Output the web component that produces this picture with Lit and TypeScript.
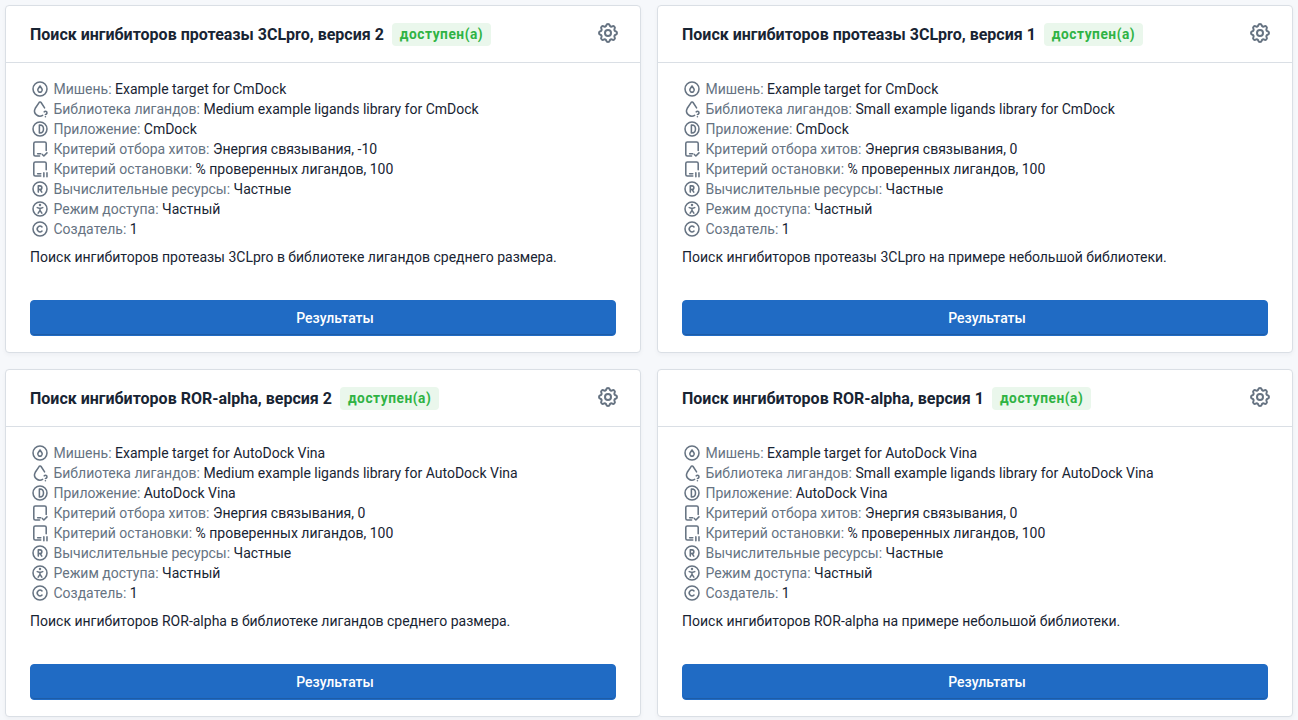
import { LitElement, html, svg, css } from "lit";
import { customElement, property } from "lit/decorators.js";

interface Search {
  title: string;
  target: string;
  library: string;
  app: string;
  hit: string;
  note: string;
}

const circle = svg`<path d="M12 12m-9 0a9 9 0 1 0 18 0a9 9 0 1 0 -18 0"/>`;

const icons = {
  target: svg`${circle}<path d="M9.6 11.6l2.4 -3.500l2.4 3.500a2.9 2.9 0 1 1 -4.8 0z"/>`,
  library: svg`<path d="M15.4 20.3a6.99 6.99 0 0 1 -7.9 -.7c-2.5 -2.1 -3.2 -5.7 -1.6 -8.5l4.9 -7.3c.2 -.3 .5 -.6 .8 -.7c.7 -.3 1.4 -.1 1.8 .5l4.5 6.9"/><path d="M19 22v.01"/><path d="M19 19a2.003 2.003 0 0 0 .914 -3.782a1.98 1.98 0 0 0 -2.414 .483"/>`,
  app: svg`${circle}<path d="M11.2 6.8v10.4h.6c2.9 0 4.7 -2.2 4.7 -5.2s-1.8 -5.2 -4.7 -5.2z"/>`,
  hit: svg`<path d="M11.5 21h-5.5a2 2 0 0 1 -2 -2v-14a2 2 0 0 1 2 -2h12a2 2 0 0 1 2 2v9"/><path d="M9 18h4"/><path d="M15 19l2 2l4 -4"/>`,
  stop: svg`<path d="M13 21h-7a2 2 0 0 1 -2 -2v-14a2 2 0 0 1 2 -2h12a2 2 0 0 1 2 2v8"/><path d="M9 18h4"/><path d="M17 17v5"/><path d="M21 17v5"/>`,
  resources: svg`${circle}<path d="M9.8 16v-8h2.3a2.3 2.3 0 1 1 0 4.6h-2.3"/><path d="M14.3 16l-2.2 -3.4"/>`,
  access: svg`${circle}<g transform="translate(-2.16 -2.16) scale(1.18)" stroke-width="1.7"><path d="M10 16.5l2 -3l2 3m-2 -3v-2l3 -1m-6 0l3 1"/><circle cx="12" cy="7.7" r=".5" fill="currentColor"/></g>`,
  creator: svg`${circle}<path d="M14.5 9.3a3.6 3.6 0 0 0 -5 .2a3.6 3.6 0 0 0 0 5a3.6 3.6 0 0 0 5 .2"/>`,
  settings: svg`<path d="M10.325 4.317c.426 -1.756 2.924 -1.756 3.35 0a1.724 1.724 0 0 0 2.573 1.066c1.543 -.94 3.31 .826 2.37 2.37a1.724 1.724 0 0 0 1.065 2.572c1.756 .426 1.756 2.924 0 3.35a1.724 1.724 0 0 0 -1.066 2.573c.94 1.543 -.826 3.31 -2.37 2.37a1.724 1.724 0 0 0 -2.572 1.065c-.426 1.756 -2.924 1.756 -3.35 0a1.724 1.724 0 0 0 -2.573 -1.066c-1.543 .94 -3.31 -.826 -2.37 -2.37a1.724 1.724 0 0 0 -1.065 -2.572c-1.756 -.426 -1.756 -2.924 0 -3.35a1.724 1.724 0 0 0 1.066 -2.573c-.94 -1.543 .826 -3.31 2.37 -2.37c1 .608 2.296 .07 2.572 -1.065z"/><path d="M9 12a3 3 0 1 0 6 0a3 3 0 0 0 -6 0"/>`,
};

const icon = (name: keyof typeof icons, viewBox = "-0.9 -0.9 25.8 25.8") =>
  html`<svg class="icon ${name}" viewBox=${viewBox} aria-hidden="true">${icons[name]}</svg>`;

@customElement("search-card")
export class SearchCard extends LitElement {
  @property({ attribute: false }) search!: Search;

  static styles = css`
    :host {
      display: flex;
      flex-direction: column;
      box-sizing: border-box;
      height: 348px;
      background: #fff;
      border: 1px solid #dadfe5;
      border-radius: 4px;
      box-shadow: rgba(24, 36, 51, 0.04) 0 2px 4px 0;
    }
    .header {
      display: flex;
      align-items: center;
      box-sizing: border-box;
      height: 57px;
      padding: 0 20px 0 24px;
      border-bottom: 1px solid #dadfe5;
    }
    .title {
      margin: 0;
      padding-top: 1px;
      font-size: 16px;
      line-height: 24px;
      font-weight: 700;
    }
    .badge {
      margin-left: 8px;
      padding: 4px 8px;
      border-radius: 4px;
      background: #eaf7ec;
      color: #2fb344;
      font-size: 13.714px;
      line-height: 15px;
      font-weight: 700;
      letter-spacing: 0.04em;
    }
    .icon {
      width: 20px;
      height: 20px;
      margin-right: 3.47px;
      flex: none;
      fill: none;
      stroke: currentColor;
      stroke-width: 2;
      stroke-linecap: round;
      stroke-linejoin: round;
    }
    .action {
      display: flex;
      margin: 0 0 2px auto;
      color: #667382;
    }
    .settings {
      width: 24px;
      height: 24px;
      margin: 0;
    }
    .body {
      display: flex;
      flex: 1;
      flex-direction: column;
      padding: 16px 24px;
    }
    .row {
      display: flex;
      align-items: center;
      height: 20px;
      white-space: pre;
    }
    .label {
      color: #667382;
      display: flex;
      align-items: center;
    }
    .note {
      margin: 8px 0 0;
    }
    .button {
      margin-top: auto;
      height: 36px;
      padding: 0 0 0 24px;
      border: 1px solid #206bc4;
      border-radius: 4px;
      background: #206bc4;
      box-shadow: inset 0 -1px 0 rgba(24, 36, 51, 0.2);
      color: #fff;
      font: 500 14px/20px Roboto, sans-serif;
    }
  `;

  private row(name: keyof typeof icons, label: string, value: string) {
    return html`<div class="row"><span class="label">${icon(name)}<span>${label}: </span></span><span>${value}</span></div>`;
  }

  render() {
    const s = this.search;
    return html`
      <div class="header">
        <h3 class="title">${s.title}</h3>
        <span class="badge">доступен(а)</span>
        <span class="action">${icon("settings", "0 0 24 24")}</span>
      </div>
      <div class="body">
        ${this.row("target", "Мишень", s.target)}
        ${this.row("library", "Библиотека лигандов", s.library)}
        ${this.row("app", "Приложение", s.app)}
        ${this.row("hit", "Критерий отбора хитов", s.hit)}
        ${this.row("stop", "Критерий остановки", "% проверенных лигандов, 100")}
        ${this.row("resources", "Вычислительные ресурсы", "Частные")}
        ${this.row("access", "Режим доступа", "Частный")}
        ${this.row("creator", "Создатель", "1")}
        <p class="note">${s.note}</p>
        <button class="button">Результаты</button>
      </div>
    `;
  }
}

const searches: Search[] = [
  {
    title: "Поиск ингибиторов протеазы 3CLpro, версия 2",
    target: "Example target for CmDock",
    library: "Medium example ligands library for CmDock",
    app: "CmDock",
    hit: "Энергия связывания, -10",
    note: "Поиск ингибиторов протеазы 3CLpro в библиотеке лигандов среднего размера.",
  },
  {
    title: "Поиск ингибиторов протеазы 3CLpro, версия 1",
    target: "Example target for CmDock",
    library: "Small example ligands library for CmDock",
    app: "CmDock",
    hit: "Энергия связывания, 0",
    note: "Поиск ингибиторов протеазы 3CLpro на примере небольшой библиотеки.",
  },
  {
    title: "Поиск ингибиторов ROR-alpha, версия 2",
    target: "Example target for AutoDock Vina",
    library: "Medium example ligands library for AutoDock Vina",
    app: "AutoDock Vina",
    hit: "Энергия связывания, 0",
    note: "Поиск ингибиторов ROR-alpha в библиотеке лигандов среднего размера.",
  },
  {
    title: "Поиск ингибиторов ROR-alpha, версия 1",
    target: "Example target for AutoDock Vina",
    library: "Small example ligands library for AutoDock Vina",
    app: "AutoDock Vina",
    hit: "Энергия связывания, 0",
    note: "Поиск ингибиторов ROR-alpha на примере небольшой библиотеки.",
  },
];

@customElement("app-root")
export class AppRoot extends LitElement {
  static styles = css`
    :host {
      display: grid;
      grid-template-columns: 1fr 1fr;
      align-content: start;
      gap: 16px;
      box-sizing: border-box;
      height: 100vh;
      padding: 5px 5px 0;
      overflow: hidden;
      background: #f6f8fb;
      color: #182433;
      font: 14px/20px Roboto, sans-serif;
    }
  `;

  render() {
    return searches.map((s) => html`<search-card .search=${s}></search-card>`);
  }
}
